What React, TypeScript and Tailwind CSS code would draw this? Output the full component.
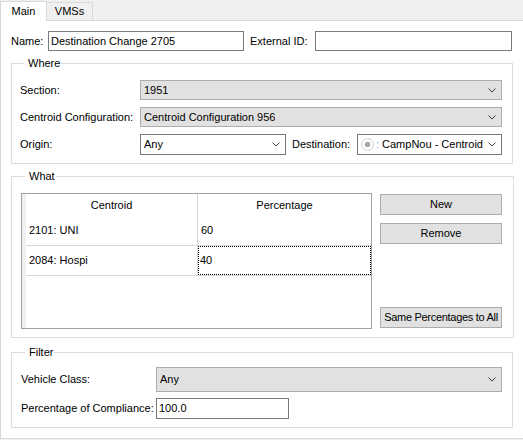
import React from "react";

function Chevron() {
    return (
        <svg width="8" height="5" viewBox="0 0 8 5" className="shrink-0">
            <polyline points="0.5,0.5 4,4 7.5,0.5" fill="none" stroke="#3c3c3c" strokeWidth="1" />
        </svg>
    );
}

function GrayCombo({ value, className = "" }: { value: string; className?: string }) {
    return (
        <div
            className={`flex items-center justify-between bg-[#e1e1e1] border border-[#adadad] pl-[3px] pr-[5px] ${className}`}
        >
            <span className="truncate">{value}</span>
            <Chevron />
        </div>
    );
}

function WhiteCombo({ children, className = "" }: { children: React.ReactNode; className?: string }) {
    return (
        <div
            className={`flex items-center justify-between bg-white border border-[#7a7a7a] pl-[3px] pr-[5px] ${className}`}
        >
            <div className="flex items-center min-w-0">{children}</div>
            <Chevron />
        </div>
    );
}

function TextBox({ value, className = "" }: { value: string; className?: string }) {
    return (
        <div className={`flex items-center bg-white border border-[#7a7a7a] pl-[2px] ${className}`}>{value}</div>
    );
}

function Group({ title, className = "", children }: { title: string; className?: string; children: React.ReactNode }) {
    return (
        <fieldset className={`border border-[#dcdcdc] ${className}`}>
            <legend className="ml-[4px] pl-[4px] pr-[1px] leading-[13px]">{title}</legend>
            {children}
        </fieldset>
    );
}

function Button({ label, className = "" }: { label: string; className?: string }) {
    return (
        <div
            className={`flex items-center justify-center w-[122px] h-[21px] bg-[#e1e1e1] border border-[#adadad] whitespace-nowrap overflow-hidden ${className}`}
        >
            {label}
        </div>
    );
}

const rows = [
    { centroid: "2101: UNI", pct: "60" },
    { centroid: "2084: Hospi", pct: "40" },
];

export default function App() {
    return (
        <div className="w-[523px] h-[440px] overflow-hidden bg-[#f0f0f0] text-black text-[11px] font-['Liberation_Sans',Arial,sans-serif]">
            {/* Tabs */}
            <div className="flex items-end h-[20px]">
                <div className="relative z-10 -mb-px flex items-center justify-center w-[47px] h-[20px] bg-white border border-b-0 border-[#d9d9d9]">
                    Main
                </div>
                <div className="flex items-center justify-center w-[46px] h-[18px] bg-[#f0f0f0] border border-l-0 border-b-0 border-[#d9d9d9]">
                    VMSs
                </div>
            </div>

            {/* Pane */}
            <div className="w-[524px] h-[419px] bg-white border border-[#d9d9d9] pl-[10px] pt-[10px]">
                <div className="flex items-center h-[20px]">
                    <span className="w-[37px]">Name:</span>
                    <TextBox value="Destination Change 2705" className="w-[196px] h-[20px]" />
                    <span className="ml-[6px] w-[65px]">External ID:</span>
                    <TextBox value="" className="w-[197px] h-[20px]" />
                </div>

                {/* Where */}
                <Group title="Where" className="w-[502px] mt-[6px] pl-[8px] pr-[10px] pt-[10px] pb-[9px]">
                    <div className="flex flex-col gap-[7px]">
                        <div className="flex items-center h-[20px]">
                            <span className="w-[120px]">Section:</span>
                            <GrayCombo value="1951" className="flex-1 h-[20px]" />
                        </div>
                        <div className="flex items-center h-[20px]">
                            <span className="w-[120px]">Centroid Configuration:</span>
                            <GrayCombo value="Centroid Configuration 956" className="flex-1 h-[20px]" />
                        </div>
                        <div className="flex items-center h-[20px]">
                            <span className="w-[120px]">Origin:</span>
                            <WhiteCombo className="w-[146px] h-[21px]">
                                <span>Any</span>
                            </WhiteCombo>
                            <span className="ml-[6px] w-[65px]">Destination:</span>
                            <WhiteCombo className="flex-1 h-[21px] pl-[1px]">
                                <svg width="13" height="13" viewBox="0 0 13 13" className="shrink-0">
                                    <circle cx="6.5" cy="6.5" r="6" fill="white" stroke="#cfcfcf" />
                                    <circle cx="6.5" cy="6.5" r="2.8" fill="#a8a8a8" />
                                </svg>
                                <span className="ml-[2px] text-[#5b9bd5]">:</span>
                                <span className="ml-[3px]">CampNou - Centroid</span>
                            </WhiteCombo>
                        </div>
                    </div>
                </Group>

                {/* What */}
                <Group title="What" className="w-[502px] mt-[6px] pl-[9px] pr-[11px] pt-[10px] pb-[8px]">
                    <div className="flex gap-[8px]">
                        <div className="flex w-[351px] h-[136px] border border-[#a0a0a0]">
                            <div className="w-[4px] bg-[#f0f0f0]" />
                            <div className="flex-1 flex flex-col">
                                <div className="flex h-[22px]">
                                    <div className="w-[172px] flex items-center justify-center border-r border-[#d8d8d8]">
                                        Centroid
                                    </div>
                                    <div className="flex-1 flex items-center justify-center">Percentage</div>
                                </div>
                                {rows.map((r, i) => (
                                    <div key={r.centroid} className="flex h-[30px] border-b border-[#d8d8d8]">
                                        <div className="w-[172px] flex items-center pl-[3px] border-r border-[#d8d8d8]">
                                            {r.centroid}
                                        </div>
                                        <div
                                            className={`flex-1 flex items-center ${
                                                i === 1 ? "border border-dotted border-black pl-[1px]" : "pl-[3px]"
                                            }`}
                                        >
                                            {r.pct}
                                        </div>
                                    </div>
                                ))}
                            </div>
                        </div>
                        <div className="flex flex-col">
                            <Button label="New" className="mt-[1px]" />
                            <Button label="Remove" className="mt-[8px]" />
                            <Button label="Same Percentages to All" className="mt-auto mb-[1px] tracking-[-0.3px]" />
                        </div>
                    </div>
                </Group>

                {/* Filter */}
                <Group title="Filter" className="w-[502px] mt-[8px] pl-[9px] pr-[10px] pt-[8px] pb-[8px]">
                    <div className="flex items-center h-[25px]">
                        <span className="w-[135px]">Vehicle Class:</span>
                        <GrayCombo value="Any" className="flex-1 h-[25px]" />
                    </div>
                    <div className="flex items-center h-[21px] mt-[6px]">
                        <span className="w-[135px]">Percentage of Compliance:</span>
                        <TextBox value="100.0" className="w-[133px] h-[21px]" />
                    </div>
                </Group>
            </div>
        </div>
    );
}
